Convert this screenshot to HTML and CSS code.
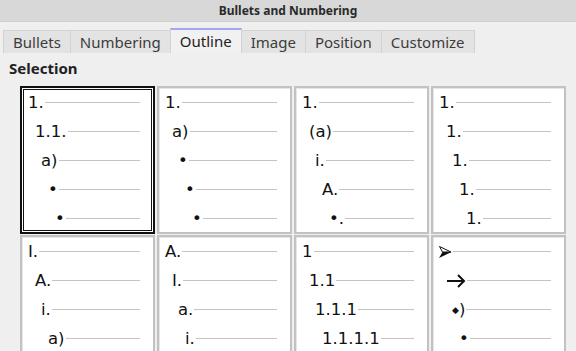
FILE: index.html
```html
<!DOCTYPE html>
<html lang="en">
<head>
    <meta charset="UTF-8">
    <title>Bullets and Numbering</title>
    <link rel="stylesheet" href="styles.css">
</head>
<body>
    <div class="titlebar">Bullets and Numbering</div>

    <div class="tabs">
        <div class="tab">Bullets</div>
        <div class="tab">Numbering</div>
        <div class="tab active">Outline</div>
        <div class="tab">Image</div>
        <div class="tab">Position</div>
        <div class="tab">Customize</div>
    </div>

    <div class="panel">
        <div class="label">Selection</div>

        <div class="grid">
            <div class="cell selected">
                <div class="item l0"><span>1.</span><i></i></div>
                <div class="item l1"><span>1.1.</span><i></i></div>
                <div class="item l2"><span>a)</span><i></i></div>
                <div class="item l3"><span>•</span><i></i></div>
                <div class="item l4"><span>•</span><i></i></div>
            </div>
            <div class="cell">
                <div class="item l0"><span>1.</span><i></i></div>
                <div class="item l1"><span>a)</span><i></i></div>
                <div class="item l2"><span>•</span><i></i></div>
                <div class="item l3"><span>•</span><i></i></div>
                <div class="item l4"><span>•</span><i></i></div>
            </div>
            <div class="cell">
                <div class="item l0"><span>1.</span><i></i></div>
                <div class="item l1"><span>(a)</span><i></i></div>
                <div class="item l2"><span>i.</span><i></i></div>
                <div class="item l3"><span>A.</span><i></i></div>
                <div class="item l4"><span>•.</span><i></i></div>
            </div>
            <div class="cell">
                <div class="item l0"><span>1.</span><i></i></div>
                <div class="item l1"><span>1.</span><i></i></div>
                <div class="item l2"><span>1.</span><i></i></div>
                <div class="item l3"><span>1.</span><i></i></div>
                <div class="item l4"><span>1.</span><i></i></div>
            </div>

            <div class="cell">
                <div class="item l0"><span>I.</span><i></i></div>
                <div class="item l1"><span>A.</span><i></i></div>
                <div class="item l2"><span>i.</span><i></i></div>
                <div class="item l3"><span>a)</span><i></i></div>
                <div class="item l4"><span>•</span><i></i></div>
            </div>
            <div class="cell">
                <div class="item l0"><span>A.</span><i></i></div>
                <div class="item l1"><span>I.</span><i></i></div>
                <div class="item l2"><span>a.</span><i></i></div>
                <div class="item l3"><span>i.</span><i></i></div>
                <div class="item l4"><span>•</span><i></i></div>
            </div>
            <div class="cell">
                <div class="item l0"><span>1</span><i></i></div>
                <div class="item l1"><span>1.1</span><i></i></div>
                <div class="item l2"><span>1.1.1</span><i></i></div>
                <div class="item l3"><span>1.1.1.1</span><i></i></div>
                <div class="item l4"><span>1.1.1.1.1</span><i></i></div>
            </div>
            <div class="cell">
                <div class="item l0">
                    <svg class="glyph" width="13" height="12" viewBox="0 0 13 12">
                        <polygon points="0.5,0.5 12,6 3.5,6" fill="#fff" stroke="#111" stroke-width="1"/>
                        <polygon points="3.5,6 12.5,6 0,12" fill="#111"/>
                    </svg><i></i>
                </div>
                <div class="item l1">
                    <svg class="glyph" width="20" height="14" viewBox="0 0 20 14">
                        <path d="M1 7H18M12 1L18 7L12 13" fill="none" stroke="#111" stroke-width="2"/>
                    </svg><i></i>
                </div>
                <div class="item l2"><span><b class="diamond">◆</b>)</span><i></i></div>
                <div class="item l3"><span>•</span><i></i></div>
                <div class="item l4"><span>•</span><i></i></div>
            </div>
        </div>
    </div>
</body>
</html>
```

FILE: styles.css
```css
body {
    margin: 0;
    width: 576px;
    height: 351px;
    overflow: hidden;
    background-color: #efefef;
    font-family: "Noto Sans", "DejaVu Sans", sans-serif;
    color: #2f2f2f;
}
.titlebar {
    height: 21px;
    line-height: 21px;
    background-color: #d8d8d8;
    text-align: center;
    font-size: 12px;
    font-weight: bold;
    color: #2a2a2a;
    border-bottom: 1px solid #cfcfcf;
}
.tabs {
    display: flex;
    margin-top: 6px;
    padding-left: 3px;
    height: 25px;
    align-items: flex-end;
}
.tab {
    height: 22px;
    line-height: 22px;
    padding: 0 9px;
    font-size: 15px;
    color: #3c3c3c;
    background-color: #e3e3e3;
    border: 1px solid #d2d2d2;
    border-bottom: none;
    margin-right: -1px;
}
.tab.active {
    height: 23px;
    background-color: #f1f1f1;
    border-top: 2px solid #a6a6ec;
    color: #222;
}
.panel {
    padding: 6px 0 0 9px;
}
.label {
    font-size: 15px;
    font-weight: bold;
    color: #222;
    line-height: 18px;
}
.grid {
    display: grid;
    grid-template-columns: repeat(4, 135px);
    grid-template-rows: 148px 149px;
    column-gap: 2px;
    row-gap: 1px;
    margin: 9px 0 0 11px;
}
.cell {
    background-color: #fff;
    border: 2px solid #c2c2c2;
    box-shadow: inset 1px 1px 0 #e6e6e6;
    padding: 0 13px 0 0;
    font-family: "DejaVu Sans", sans-serif;
    font-size: 16.5px;
    color: #111;
}
.cell.selected {
    border-color: #111;
    box-shadow: inset 0 0 0 1px #fff, inset 0 0 0 2px #111;
}
.item {
    display: flex;
    align-items: center;
    height: 29px;
    white-space: nowrap;
}
.item span {
    line-height: 29px;
}
.item i {
    flex: 1;
    height: 1px;
    margin-left: 1px;
    background-color: #c4c4c4;
}
.glyph {
    display: block;
    flex: none;
}
.l0 { padding-left: 6px; }
.l1 { padding-left: 13px; }
.l2 { padding-left: 19px; }
.l3 { padding-left: 26px; }
.l4 { padding-left: 33px; }
.diamond {
    font-size: 9px;
    vertical-align: 2px;
}
```
